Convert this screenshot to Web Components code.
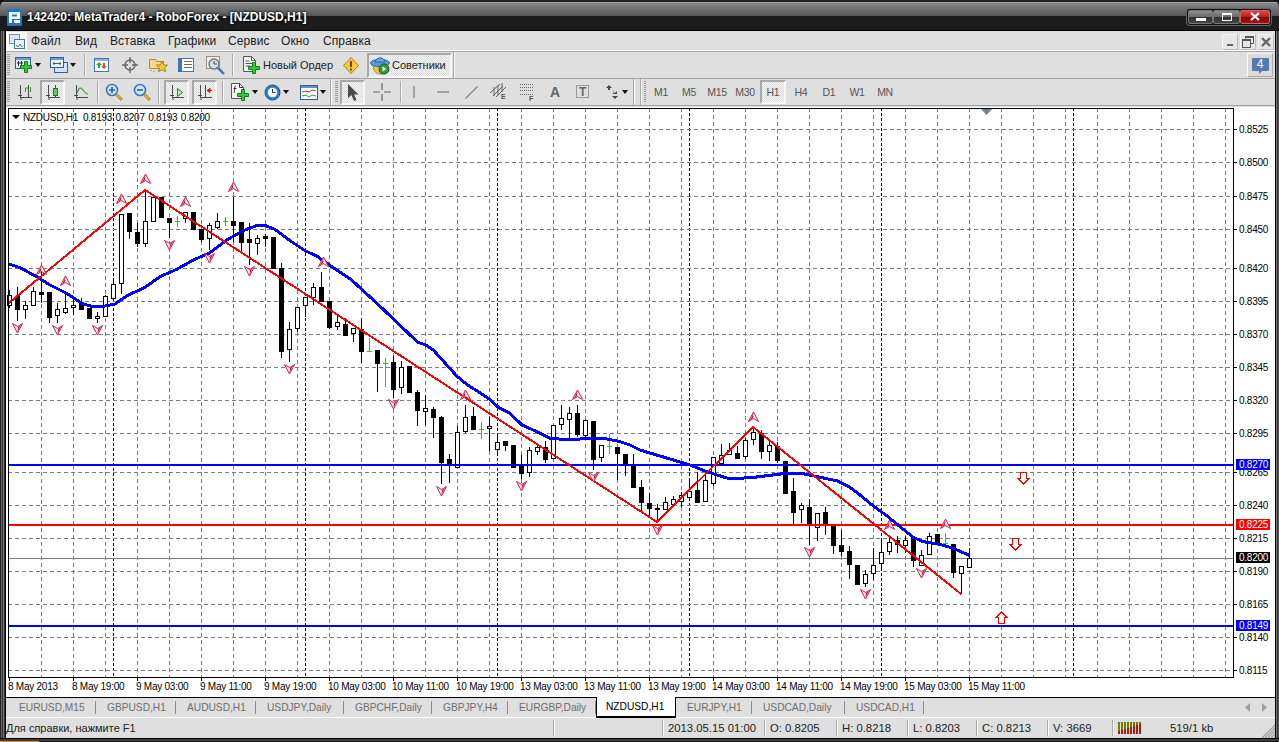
<!DOCTYPE html>
<html>
<head>
<meta charset="utf-8">
<title>MetaTrader4</title>
<style>
html,body{margin:0;padding:0;background:#1a1a1a;overflow:hidden}
body{font-family:"Liberation Sans",Arial,sans-serif}
</style>
</head>
<body>
<mt-window>
    <mt-titlebar slot="title" caption="142420: MetaTrader4 - RoboForex - [NZDUSD,H1]"></mt-titlebar>
    <mt-menubar>
        <mt-menu w="44">Файл</mt-menu>
        <mt-menu w="35">Вид</mt-menu>
        <mt-menu w="58">Вставка</mt-menu>
        <mt-menu w="60">Графики</mt-menu>
        <mt-menu w="53">Сервис</mt-menu>
        <mt-menu w="42">Окно</mt-menu>
        <mt-menu w="60">Справка</mt-menu>
    </mt-menubar>
    <mt-toolbar>
        <mt-grip></mt-grip>
        <mt-tool w="30" ml="1" pl="3" icon="newchart" arrow></mt-tool>
        <mt-tool w="30" ml="5" pl="3" icon="profiles" arrow></mt-tool>
        <mt-sep ml="7"></mt-sep>
        <mt-tool w="24" ml="4" icon="market"></mt-tool>
        <mt-tool w="24" ml="4" icon="nav"></mt-tool>
        <mt-tool w="24" ml="4" icon="stars"></mt-tool>
        <mt-tool w="24" ml="4" icon="term"></mt-tool>
        <mt-tool w="24" ml="5" icon="tester"></mt-tool>
        <mt-sep ml="5"></mt-sep>
        <mt-tool w="98" ml="4" pl="5" icon="order">Новый Ордер</mt-tool>
        <mt-tool w="24" ml="3" icon="warn"></mt-tool>
        <mt-tool w="85" ml="4" pl="1" icon="experts" pressed>Советники</mt-tool>
        <mt-sep ml="1" strong></mt-sep>
        <mt-chat>4</mt-chat>
    </mt-toolbar>
    <mt-toolbar>
        <mt-grip></mt-grip>
        <mt-tool w="24" ml="2" icon="bars"></mt-tool>
        <mt-tool w="25" ml="3" icon="candle" pressed></mt-tool>
        <mt-tool w="25" ml="3" icon="line"></mt-tool>
        <mt-sep ml="4"></mt-sep>
        <mt-tool w="25" ml="2" icon="zoomin"></mt-tool>
        <mt-tool w="26" ml="3" icon="zoomout"></mt-tool>
        <mt-sep ml="3"></mt-sep>
        <mt-tool w="25" ml="4" icon="autoscroll" pressed></mt-tool>
        <mt-tool w="25" ml="3" icon="shift" pressed></mt-tool>
        <mt-sep ml="5"></mt-sep>
        <mt-tool w="30" ml="4" pl="3" icon="indicator" arrow></mt-tool>
        <mt-tool w="31" ml="3" pl="3" icon="clock" arrow></mt-tool>
        <mt-tool w="29" ml="5" pl="3" icon="template" arrow></mt-tool>
        <mt-sep ml="4" strong></mt-sep>
        <mt-grip ml="2"></mt-grip>
        <mt-tool w="25" ml="1" icon="cursor" pressed></mt-tool>
        <mt-tool w="25" ml="4" icon="cross"></mt-tool>
        <mt-sep ml="6"></mt-sep>
        <mt-tool w="24" icon="vline"></mt-tool>
        <mt-tool w="24" ml="5" icon="hline"></mt-tool>
        <mt-tool w="24" ml="4" icon="trend"></mt-tool>
        <mt-tool w="24" ml="4" icon="channel"></mt-tool>
        <mt-tool w="24" ml="4" icon="fibo"></mt-tool>
        <mt-tool w="24" ml="4" icon="textA"></mt-tool>
        <mt-tool w="24" ml="4" icon="textT"></mt-tool>
        <mt-tool w="32" ml="5" pl="5" icon="arrows" arrow></mt-tool>
        <mt-sep ml="1" strong></mt-sep>
        <mt-sep ml="5" strong></mt-sep>
        <mt-grip ml="1" w="3"></mt-grip>
        <mt-period>M1</mt-period>
        <mt-period>M5</mt-period>
        <mt-period>M15</mt-period>
        <mt-period>M30</mt-period>
        <mt-period pressed>H1</mt-period>
        <mt-period>H4</mt-period>
        <mt-period>D1</mt-period>
        <mt-period>W1</mt-period>
        <mt-period>MN</mt-period>
    </mt-toolbar>
    <mt-chart></mt-chart>
    <mt-tabs>
        <mt-tab w="88">EURUSD,M15</mt-tab>
        <mt-tab w="80">GBPUSD,H1</mt-tab>
        <mt-tab w="80">AUDUSD,H1</mt-tab>
        <mt-tab w="88">USDJPY,Daily</mt-tab>
        <mt-tab w="88">GBPCHF,Daily</mt-tab>
        <mt-tab w="76">GBPJPY,H4</mt-tab>
        <mt-tab w="88">EURGBP,Daily</mt-tab>
        <mt-tab w="80" active>NZDUSD,H1</mt-tab>
        <mt-tab w="76">EURJPY,H1</mt-tab>
        <mt-tab w="93">USDCAD,Daily</mt-tab>
        <mt-tab w="79">USDCAD,H1</mt-tab>
    </mt-tabs>
    <mt-statusbar>
        <mt-cell w="548">Для справки, нажмите F1</mt-cell>
        <mt-cell w="109"></mt-cell>
        <mt-cell w="102">2013.05.15 01:00</mt-cell>
        <mt-cell w="72">O: 0.8205</mt-cell>
        <mt-cell w="71">H: 0.8218</mt-cell>
        <mt-cell w="69">L: 0.8203</mt-cell>
        <mt-cell w="71">C: 0.8213</mt-cell>
        <mt-cell w="65">V: 3669</mt-cell>
        <mt-cell w="57"><mt-conn></mt-conn></mt-cell>
        <mt-cell w="90">519/1 kb</mt-cell>
    </mt-statusbar>
</mt-window>

<script>
const FONT = `"Liberation Sans",Arial,sans-serif`;
const PRESSED = `background:conic-gradient(#f6f6f6 25%,#dadada 0 50%,#f6f6f6 0 75%,#dadada 0) 0 0/2px 2px;border:2px solid;border-color:#a8a8a8 #f6f6f6 #f6f6f6 #a8a8a8;box-sizing:border-box;`;

const plus = (x, y) => `<path d="M${x+4.5} ${y+.5}h3v4h4v3h-4v4h-3v-4h-4v-3h4z" fill="#36c736" stroke="#0d7d1f"/>`;
const axis = `<path d="M3.5 1v12.5H15M1 11.5h4M4 16v-3" fill="none" stroke="#4a4a4a"/><path d="M11.5 1v13" stroke="#4a4a4a"/>`;
const lens = (sign) => `<circle cx="7" cy="7" r="5.5" fill="#cfe6fb" stroke="#3a78c0" stroke-width="1.6"/><path d="M11 11l6 6" stroke="#b08a20" stroke-width="3"/><path d="M11.5 11.5l5 5" stroke="#f0d060" stroke-width="1"/><path d="${sign}" stroke="#2a5fa8" stroke-width="1.6"/>`;

const ICONS = {
    newchart: [18,16,`<rect x=".5" y=".5" width="15" height="11" fill="#e4eefa" stroke="#2b5f9e"/><rect x="1" y="1" width="14" height="2" fill="#6c9ad2"/><path d="M3.5 4v5M6.5 4v5M2 6h6" stroke="#333"/>${plus(5,4)}`],
    profiles: [18,16,`<rect x="4.5" y="5.5" width="13" height="10" fill="#d5e4f6" stroke="#2b5f9e"/><rect x=".5" y=".5" width="13" height="10" fill="#eef4fb" stroke="#2b5f9e"/><rect x="1" y="1" width="12" height="2" fill="#6c9ad2"/><path d="M3 6.5h8M4 5v3M10 5v3" stroke="#555"/>`],
    market: [16,16,`<rect x=".5" y="1.5" width="14" height="13" fill="#fff" stroke="#3f74b3"/><rect x="1" y="2" width="13" height="2" fill="#8db2de"/><path d="M5 5l3 3H6v3H4V8H2z" fill="#2ca82c"/><path d="M10 12l-3-3h2V6h2v3h2z" fill="#e0502a"/>`],
    nav: [16,16,`<circle cx="8" cy="8" r="5" fill="none" stroke="#666" stroke-width="1.4"/><path d="M8 0v6M8 10v6M0 8h6M10 8h6" stroke="#666" stroke-width="1.4"/>`],
    stars: [19,18,`<path d="M.5 3.5h6l1 2h7v7H.5z" fill="#f5d986" stroke="#a98c3c"/><path d="M13 5l1.6 3.8 4 .3-3 2.7 1 4-3.6-2.1-3.6 2.1 1-4-3-2.7 4-.3z" fill="#f3c93a" stroke="#a8841c"/><path d="M2 14v1M5 15v1" stroke="#777"/>`],
    term: [16,15,`<rect x=".5" y=".5" width="15" height="13" fill="#fff" stroke="#3f74b3"/><rect x="1" y="1" width="3" height="12" fill="#3f74b3"/><path d="M6 3.5h8M6 6.5h8M6 9.5h8" stroke="#6a6a6a"/>`],
    tester: [19,19,`<rect x=".5" y=".5" width="13" height="12" fill="#f3efe8" stroke="#a08c80"/><circle cx="8" cy="8" r="5" fill="#cfe0f2" stroke="#777" stroke-width="1.4"/><path d="M8 5v3h3" stroke="#444" fill="none"/><path d="M12 12l6 6" stroke="#3b6fb0" stroke-width="2.4"/>`],
    order: [18,19,`<path d="M.5.5h8l4 4v11H.5z" fill="#fbfbfb" stroke="#555"/><path d="M8.5.5v4h4M2.5 5h4M2.5 7.5h7M2.5 10h5" fill="none" stroke="#555"/>${plus(5,6)}`],
    warn: [16,17,`<path d="M8 .5l7.5 8-7.5 8-7.5-8z" fill="#f7c93a" stroke="#a9811a"/><path d="M8 4v6M8 11.5v2" stroke="#6b4a08" stroke-width="2"/>`],
    experts: [20,19,`<path d="M3 9c0 6 3 9 8 9s6-4 6-8z" fill="#e8c84a" stroke="#a88a1c"/><ellipse cx="10" cy="7" rx="9.5" ry="3.6" fill="#5d9bd8" stroke="#2e62a2"/><path d="M5 6c1-5 9-6 10 0z" fill="#6aa6e0" stroke="#2e62a2"/><circle cx="14" cy="13" r="5" fill="#2f9a3a" stroke="#176020"/><path d="M12.5 10.5l4 2.5-4 2.5z" fill="#fff"/>`],
    bars: [16,16,`${axis}<path d="M8.5 4v4M8.5 4h3M13.5 3v5" stroke="#2a9a2a" fill="none"/>`],
    candle: [16,16,`${axis.replace('<path d="M11.5 1v13" stroke="#4a4a4a"/>','')}<path d="M10.5 1v13" stroke="#4a4a4a"/><rect x="8.5" y="4.5" width="4" height="7" fill="#55d455" stroke="#14801f"/>`],
    line: [16,16,`<path d="M3.5 1v12.5H15M1 11.5h4M4 16v-3" fill="none" stroke="#4a4a4a"/><path d="M4 9c2-6 4-6 6-3s3 4 5 4" fill="none" stroke="#3aa03a" stroke-width="1.2"/>`],
    zoomin: [18,18,lens("M4 7h6M7 4v6")],
    zoomout: [18,18,lens("M4 7h6")],
    autoscroll: [16,16,`<path d="M3.5 1v12.5H15M1 11.5h4M4 16v-3" fill="none" stroke="#4a4a4a"/><path d="M8.5 4.5l5 4-5 4z" fill="#b8f0b8" stroke="#1e8a1e"/>`],
    shift: [16,16,`<path d="M3.5 1v12.5H15M1 11.5h4M4 16v-3M8.5 1v13" fill="none" stroke="#4a4a4a"/><path d="M10 6.5h5M10 6.5l3-2v4z" fill="#d8301a" stroke="#c02010"/>`],
    indicator: [19,19,`<path d="M.5.5h8l4 4v11H.5z" fill="#fbfbfb" stroke="#555"/><path d="M8.5.5v4h4M5 3c-2 0-1 3-2 7M2.5 5.5h3" fill="none" stroke="#333"/>${plus(6,6)}`],
    clock: [17,17,`<circle cx="8.5" cy="8.5" r="7.5" fill="#2d7cd0" stroke="#174a8c"/><circle cx="8.5" cy="8.5" r="4.8" fill="#f3f7fb"/><path d="M8.5 5v3.5h3" fill="none" stroke="#333"/>`],
    template: [18,15,`<rect x=".5" y=".5" width="17" height="14" fill="#fff" stroke="#2b5f9e"/><rect x="1" y="1" width="16" height="2" fill="#5c8fcf"/><path d="M2 7l4-1 3 1 3-2 4 1" fill="none" stroke="#d03020"/><path d="M2 11l4-1 3 2 3-2 4 1" fill="none" stroke="#2a9a2a"/>`],
    cursor: [12,17,`<path d="M1 0v14l3.5-3 2.5 6 2.5-1-2.5-5.5h4.5z" fill="#4a4a4a"/>`],
    cross: [18,18,`<path d="M9 0v7M9 11v7M0 9h7M11 9h7" stroke="#666" stroke-width="1.2"/>`],
    vline: [2,12,`<path d="M1 0v12" stroke="#666"/>`],
    hline: [12,2,`<path d="M0 1h12" stroke="#666"/>`],
    trend: [13,13,`<path d="M.5 12.5l12-12" stroke="#888" stroke-width="1.3"/>`],
    channel: [20,20,`<path d="M1 11L11 2M4 14L14 4M7 15L17 5M5 5v9M9 3v10M13 1v9" stroke="#666" fill="none"/><text x="12" y="17" font-size="7" font-weight="bold" fill="#555" font-family="Liberation Sans">E</text>`],
    fibo: [15,20,`<path d="M0 2.500h14M0 5.500h14M0 8.500h14M0 12.500h14" stroke="#666" stroke-dasharray="1 1"/><text x="9" y="19" font-size="7" font-weight="bold" fill="#555" font-family="Liberation Sans">F</text>`],
    textA: [14,18,`<text x="2" y="14" font-size="14" font-weight="bold" fill="#666" font-family="Liberation Sans">A</text>`],
    textT: [14,16,`<rect x=".5" y="1.500" width="12" height="12" fill="none" stroke="#555" stroke-dasharray="1 1"/><text x="3" y="12" font-size="12" font-weight="bold" fill="#666" font-family="Liberation Sans">T</text>`],
    arrows: [15,14,`<path d="M4 0l3 3H5v2H3V3H1zM7 5l3 3 2-2v3H7l2-1z" fill="#444"/><path d="M10 14l-3-3h6z" fill="#444"/>`]
};

class MtWindow extends HTMLElement{
    constructor(){
        super();
        this.attachShadow({mode: "open"}).innerHTML = `
        <style>
        :host{display:flex;flex-direction:column;width:1279px;height:742px;overflow:hidden;background:#111;position:relative}
        .frame{flex:1;display:flex;flex-direction:column;min-height:0;padding:0 4px 4px 6px;
            background:linear-gradient(90deg,#222 0 1px,#666 1px 2px,#333 2px 3px,#777 3px 4px,#333 4px 5px,#000 5px 6px,transparent 6px),
            linear-gradient(270deg,#555 0 1px,#333 1px 2px,#777 2px 3px,#000 3px 4px,transparent 4px);
            background-color:#dfdfdf;box-sizing:border-box;position:relative}
        .bottom{position:absolute;left:0;right:0;bottom:0;height:4px;background:linear-gradient(#000 0 1px,#3c3c3c 1px 3px,#1a1a1a 3px)}
        .bottom i{position:absolute;left:0;bottom:0;width:39px;height:1px;background:#e08a20}
        </style>
        <slot name="title"></slot>
        <div class="frame"><slot></slot><div class="bottom"><i></i></div></div>`;
    }
}

class MtTitlebar extends HTMLElement{
    constructor(){
        super();
        this.attachShadow({mode: "open"}).innerHTML = `
        <style>
        :host{display:flex;align-items:center;height:31px;box-sizing:border-box;padding:3px 5px 0 7px;flex:none;
            background:linear-gradient(#222 0 2px,#a0a0a0 2px 3px,#888 3px,#555 16px,#1c1c1c 16px,#1c1c1c 30px,#000 30px);
            border-radius:7px 7px 0 0;}
        svg{flex:none}
        .cap{margin-left:5px;color:#fff;font:bold 12px ${FONT};text-shadow:0 0 3px #000,0 0 2px #000;white-space:nowrap;flex:1}
        .btns{display:flex;padding:1px;background:#111;border-radius:3px;margin-right:3px;margin-top:-1px;box-shadow:0 0 0 1px #666}
        .b{height:14px;display:flex;align-items:center;justify-content:center;box-sizing:border-box;border:1px solid #777;border-radius:2px}
        .g{background:linear-gradient(#8c8c8c,#6a6a6a 50%,#333 50%,#444)}
        .r{background:linear-gradient(#d44,#b52020 50%,#7e0a0a 50%,#9a1818);border-color:#c66}
        </style>
        <svg width="15" height="17" viewBox="0 0 15 17"><rect width="15" height="17" rx="1" fill="#1d76c4"/><path d="M2 3h11v7H5v4H2z" fill="#fff"/><rect x="5" y="5.500" width="5" height="2" fill="#1d76c4"/><rect x="7" y="11" width="6" height="3" fill="#fff"/></svg>
        <div class="cap">${this.getAttribute("caption")}</div>
        <div class="btns">
            <div class="b g" style="width:25px"><svg width="10" height="8"><rect y="5" width="10" height="3" fill="#fff"/></svg></div>
            <div class="b g" style="width:27px"><svg width="10" height="8"><rect x=".5" y=".5" width="9" height="7" fill="none" stroke="#fff"/><rect width="10" height="2" fill="#fff"/></svg></div>
            <div class="b r" style="width:30px"><svg width="10" height="9"><path d="M1 1l8 7M9 1L1 8" stroke="#fff" stroke-width="2.2"/></svg></div>
        </div>`;
    }
}

class MtMenubar extends HTMLElement{
    constructor(){
        super();
        this.attachShadow({mode: "open"}).innerHTML = `
        <style>
        :host{display:flex;align-items:center;height:21px;flex:none;box-sizing:border-box;background:#dfdfdf;border-bottom:1px solid #a8a8a8;box-shadow:inset 0 -1px #fff;}
        .logo{width:21px;height:19px;background:#fff;display:flex;align-items:center;justify-content:center;margin-right:4px}
        .right{margin-left:auto;display:flex;gap:2px;margin-right:1px;margin-top:1px}
        .c{width:16px;height:16px;display:flex;align-items:center;justify-content:center;background:#e6e6e6;border:1px solid;border-color:#f4f4f4 #bbb #bbb #f4f4f4;box-sizing:border-box}
        </style>
        <div class="logo"><svg width="16" height="15" viewBox="0 0 16 15"><rect x=".5" y=".5" width="10" height="9" fill="#dbe8f7" stroke="#6d93c6"/><rect x="5.500" y="5.500" width="10" height="9" fill="#eef4fb" stroke="#3f74b3"/><path d="M7 11l2 2 2-3 2 3" fill="none" stroke="#3f74b3"/></svg></div>
        <slot></slot>
        <div class="right">
            <div class="c"><svg width="10" height="10"><rect x="2" y="7" width="6" height="2" fill="#666"/></svg></div>
            <div class="c"><svg width="14" height="14"><path d="M4.500 3.500V1.500h8v7h-3" fill="none" stroke="#555"/><rect x="1.500" y="4.500" width="8" height="8" fill="none" stroke="#555"/><rect x="4" y="1" width="9" height="2" fill="#555"/><rect x="1" y="4" width="9" height="2" fill="#555"/></svg></div>
            <div class="c"><svg width="12" height="12"><path d="M2 2l8 8M10 2l-8 8" stroke="#666" stroke-width="2.4"/></svg></div>
        </div>`;
    }
}

class MtMenu extends HTMLElement{
    constructor(){
        super();
        this.attachShadow({mode: "open"}).innerHTML = `
        <style>:host{display:block;width:${this.getAttribute("w")}px;font:12px ${FONT};color:#222;white-space:nowrap;letter-spacing:.1px}</style><slot></slot>`;
    }
}

class MtToolbar extends HTMLElement{
    constructor(){
        super();
        this.attachShadow({mode: "open"}).innerHTML = `
        <style>:host{display:flex;align-items:center;height:27px;flex:none;box-sizing:border-box;background:#dfdfdf;border-bottom:1px solid #a0a0a0;}</style><slot></slot>`;
    }
}

class MtGrip extends HTMLElement{
    constructor(){
        super();
        this.attachShadow({mode: "open"}).innerHTML = `
        <style>:host{display:block;width:${this.getAttribute("w") || 5}px;height:22px;flex:none;margin-left:${this.getAttribute("ml") || 0}px;
            background:repeating-linear-gradient(#999 0 1px,transparent 1px 2px) 1px 0/3px 100% no-repeat}</style>`;
    }
}

class MtSep extends HTMLElement{
    constructor(){
        super();
        const strong = this.hasAttribute("strong");
        this.attachShadow({mode: "open"}).innerHTML = `
        <style>:host{display:block;width:2px;height:${strong ? 26 : 22}px;flex:none;margin-left:${this.getAttribute("ml") || 0}px;
            background:linear-gradient(90deg,#a8a8a8 0 1px,#f8f8f8 1px)}</style>`;
    }
}

class MtTool extends HTMLElement{
    constructor(){
        super();
        const ic = ICONS[this.getAttribute("icon")];
        const pressed = this.hasAttribute("pressed");
        const pl = this.getAttribute("pl");
        this.attachShadow({mode: "open"}).innerHTML = `
        <style>
        :host{display:flex;align-items:center;justify-content:${pl ? "flex-start" : "center"};gap:2px;height:25px;flex:none;box-sizing:border-box;
            width:${this.getAttribute("w")}px;margin-left:${this.getAttribute("ml") || 0}px;padding-left:${pl || 0}px;
            font:11px ${FONT};color:#222;white-space:nowrap;${pressed ? PRESSED : ""}}
        svg{flex:none;display:block}
        </style>
        <svg width="${ic[0]}" height="${ic[1]}" viewBox="0 0 ${ic[0]} ${ic[1]}">${ic[2]}</svg>
        <slot></slot>
        ${this.hasAttribute("arrow") ? `<svg width="6" height="4"><path d="M0 0h6L3 4z" fill="#111"/></svg>` : ""}`;
    }
}

class MtChat extends HTMLElement{
    constructor(){
        super();
        this.attachShadow({mode: "open"}).innerHTML = `
        <style>
        :host{display:block;margin-left:auto;margin-right:2px;width:26px;height:24px;box-sizing:border-box;border:1px solid;border-color:#f8f8f8 #aaa #aaa #f8f8f8;position:relative;background:#d9d9d9}
        svg{position:absolute;left:4px;top:4px}
        span{position:absolute;left:4px;top:4px;width:16px;text-align:center;color:#fff;font:12px/13px ${FONT}}
        </style>
        <svg width="17" height="18" viewBox="0 0 17 18"><path d="M1 0h15a1 1 0 0 1 1 1v11a1 1 0 0 1-1 1H10l-3 3v-3H1a1 1 0 0 1-1-1V1a1 1 0 0 1 1-1z" fill="#5878b4"/></svg>
        <span><slot></slot></span>`;
    }
}

class MtPeriod extends HTMLElement{
    constructor(){
        super();
        this.attachShadow({mode: "open"}).innerHTML = `
        <style>
        :host{display:flex;align-items:center;justify-content:center;width:26px;height:24px;margin-left:2px;flex:none;box-sizing:border-box;
            font:10.5px ${FONT};letter-spacing:-.3px;color:#555;${this.hasAttribute("pressed") ? PRESSED : ""}}
        </style><slot></slot>`;
    }
}

class MtTabs extends HTMLElement{
    constructor(){
        super();
        this.attachShadow({mode: "open"}).innerHTML = `
        <style>
        :host{display:flex;height:21px;flex:none;box-sizing:border-box;background:#dfdfdf;border-top:1px solid #000;border-bottom:1px solid #fff;padding-left:2px;position:relative;margin-right:0}
        .nav{margin-left:auto;display:flex;gap:11px;align-items:center;padding-right:7px}
        </style>
        <slot></slot>
        <div class="nav"><svg width="6" height="9"><path d="M5 0v9L0 4.500z" fill="#a0a0a0"/></svg><svg width="6" height="9"><path d="M0 0v9l5-4.500z" fill="#a0a0a0"/></svg></div>`;
    }
}

class MtTab extends HTMLElement{
    constructor(){
        super();
        const active = this.hasAttribute("active");
        this.attachShadow({mode: "open"}).innerHTML = `
        <style>
        :host{display:flex;align-items:center;height:${active ? 20 : 19}px;box-sizing:border-box;flex:none;width:${this.getAttribute("w")}px;padding-left:11px;
            font:10.2px ${FONT};white-space:nowrap;
            ${active ? "background:#fff;color:#000;border:1px solid #000;border-top:0;border-bottom:2px solid #000;margin-top:-1px;height:21px;padding-left:9px" : "color:#6e6e6e;"}}
        :host(:not([active])){background:linear-gradient(#8a8a8a,#8a8a8a) right center/1px 13px no-repeat}
        :host([active]){background:#fff}
        </style><slot></slot>`;
    }
}

class MtStatusbar extends HTMLElement{
    constructor(){
        super();
        this.attachShadow({mode: "open"}).innerHTML = `
        <style>
        :host{display:flex;align-items:center;height:20px;flex:none;background:#dfdfdf;position:relative}
        svg{position:absolute;right:0;bottom:0}
        </style>
        <slot></slot>
        <svg width="14" height="14"><path d="M1 14L14 1M4 14L14 4M7 14l7-7M10 14l4-4M13 14l1-1" stroke="#9a9a9a" stroke-width="1.2"/></svg>`;
    }
}

class MtCell extends HTMLElement{
    constructor(){
        super();
        this.attachShadow({mode: "open"}).innerHTML = `
        <style>
        :host{display:flex;align-items:center;height:16px;box-sizing:border-box;flex:none;width:${this.getAttribute("w")}px;
            padding-left:5px;font:11.3px ${FONT};color:#222;white-space:nowrap;
            border-right:1px solid #a8a8a8;box-shadow:1px 0 #fff}
        :host(:first-child){padding-left:0;font-size:11px}
        :host(:last-child){border:0;box-shadow:none;padding-left:0}
        :host(:nth-last-child(2)){border:0;box-shadow:none}
        </style><slot></slot>`;
    }
}

class MtConn extends HTMLElement{
    constructor(){
        super();
        let bars = "";
        for (let i = 0; i < 8; i++){
            const x = i * 3;
            const h = 3 + i;
            bars += `<rect x="${x}" y="0" width="2" height="${12 - h}" fill="#6b7f00"/><rect x="${x}" y="${12 - h}" width="2" height="${h}" fill="#b01808"/>`;
        }
        this.attachShadow({mode: "open"}).innerHTML = `
        <style>:host{display:block;height:12px;line-height:0}</style><svg width="24" height="12">${bars}</svg>`;
    }
}

// candles as read from the reference: [wick top, body top, body bottom, wick bottom, kind]
// h hollow, b black, g green doji. y values are crop coords, scaled 3x
const CANDLE_SEGS = [
    [170, [
        [360,376,404,415,"h"],[350,378,416,452,"b"],[392,406,418,446,"h"],[350,364,404,404,"h"],[300,366,372,400,"b"],
        [366,366,440,458,"b"],[400,418,436,458,"h"],[372,415,425,432,"h"],[388,406,412,434,"h"],[385,402,418,420,"b"],
        [414,414,444,445,"b"],[425,439,445,458,"h"],[375,379,437,440,"h"],[330,343,383,383,"h"],[133,133,340,372,"h"],
        [129,129,182,208,"b"],[160,186,218,232,"b"],[60,154,220,230,"h"],[82,82,152,155,"h"],[82,82,142,142,"b"],
        [144,144,155,205,"b"],[138,153,153,170,"g"],[125,125,145,158,"h"],[127,127,177,178,"b"],[178,178,206,215,"b"],
        [158,166,203,240,"h"],[130,154,170,176,"h"],[142,153,153,168,"g"],[80,154,164,215,"b"],[156,156,215,250,"b"],
        [160,208,215,285,"b"],[195,205,218,255,"h"],[192,198,203,232,"b"],[200,200,294,294,"b"],[280,294,542,563,"b"],
        [457,478,538,575,"h"],[412,412,475,485,"h"],[380,380,406,440,"h"],[340,350,382,404,"h"]
    ]],
    [250, [
        [65,110,152,155,"b"],[153,153,230,238,"b"],[195,217,228,240,"h"],[205,222,254,254,"b"],[235,235,250,276,"h"],
        [205,238,302,338,"b"],[265,304,304,305,"g"],[300,300,338,425,"b"],[325,340,340,410,"g"],[318,337,416,444,"b"],
        [332,352,412,432,"h"],[348,348,426,430,"b"],[420,426,479,528,"b"],[435,475,484,525,"h"],[472,477,500,564,"b"],
        [498,501,635,702,"b"],[612,628,642,698,"b"],[528,547,650,650,"h"],[465,502,542,548,"h"],[472,498,536,536,"b"],
        [516,538,538,566,"g"],[500,529,535,604,"h"],[552,577,598,610,"h"],[574,574,584,602,"b"],[585,585,650,652,"b"],
        [615,645,668,686,"b"],[590,600,665,680,"h"],[578,590,604,616,"h"],[572,592,628,640,"b"],[526,526,625,628,"h"],
        [465,503,523,540,"h"],[472,488,508,565,"h"],[465,490,552,560,"b"],[511,511,554,570,"h"],[514,514,626,660,"b"],
        [586,586,622,636,"h"],[552,588,588,612,"g"],[590,592,610,690,"b"],[612,612,645,678,"b"],[612,648,710,710,"b"]
    ]],
    [400, [
        [240,262,305,340,"b"],[278,310,323,355,"b"],[313,325,328,365,"b"],[290,305,326,328,"h"],[288,298,312,320,"h"],
        [275,286,302,322,"h"],[235,274,290,290,"h"],[215,270,305,305,"b"],[215,241,302,305,"h"],[172,172,248,258,"h"],
        [132,166,190,190,"h"],[130,150,163,163,"h"],[138,158,174,176,"b"],[113,121,167,176,"h"],[80,97,116,135,"h"],
        [90,100,152,178,"b"],[125,136,154,184,"h"],[125,137,180,190,"b"],[183,183,278,278,"b"],[235,273,335,375,"b"],
        [310,316,328,370,"h"],[298,322,374,435,"b"],[340,340,380,422,"h"],[322,337,368,405,"b"],[373,373,434,462,"b"],
        [390,436,452,468,"b"],[438,454,491,537,"b"],[495,495,552,555,"b"],[510,523,548,562,"h"],[445,496,520,540,"h"],
        [422,455,490,505,"h"],[408,425,454,464,"h"],[408,420,433,460,"b"],[408,421,436,460,"h"],[408,415,480,500,"b"],
        [450,464,494,498,"h"],[398,409,461,466,"h"],[403,403,425,430,"b"],[400,429,429,436,"g"],[433,433,515,535,"b"],
        [499,499,520,582,"h"],[445,475,502,502,"h"]
    ]]
];

const MA_PTS = [
    [0,[[28,282],[60,293],[110,320],[150,345],[200,370],[245,400],[275,409],[310,409],[345,402],[385,375],[435,352],[480,320],[530,298],[580,270],[630,248],[680,210],[730,182],[770,167],[800,168],[825,178],[870,212],[915,242],[950,258]],170],
    [320,[[0,25],[50,60],[95,90],[125,118],[160,150],[190,178],[225,212],[260,245],[292,276],[315,284],[340,300],[365,328],[385,350],[410,378],[440,403],[470,422],[510,448],[535,472],[570,490],[605,524],[650,545],[690,565],[760,570],[795,565],[850,565],[900,575],[930,585]],250],
    [640,[[0,150],[50,165],[100,180],[150,195],[200,215],[260,234],[300,235],[350,231],[430,221],[480,219],[540,232],[590,242],[630,262],[660,285],[700,318],[740,347],[780,380],[820,412],[850,425],[900,433],[940,445],[990,467]],400]
];

const PRICES = [["0.8525",129],["0.8500",162],["0.8475",196],["0.8450",229],["0.8420",268],["0.8395",301],["0.8370",334],["0.8345",367],["0.8320",400],["0.8295",433],["0.8265",472],["0.8240",505],["0.8215",538],["0.8190",571],["0.8165",604],["0.8140",637],["0.8115",670]];
const TIMES = ["8 May 2013","8 May 19:00","9 May 03:00","9 May 11:00","9 May 19:00","10 May 03:00","10 May 11:00","10 May 19:00","13 May 03:00","13 May 11:00","13 May 19:00","14 May 03:00","14 May 11:00","14 May 19:00","15 May 03:00","15 May 11:00"];
const UP_MARKS = [[41,270],[65,281],[121,199],[145,179],[185,202],[233,187],[323,262],[465,395],[577,395],[753,417],[889,525],[945,524]];
const DOWN_MARKS = [[17,328],[57,330],[97,330],[169,245],[209,258],[249,271],[289,369],[393,404],[441,491],[521,486],[593,477],[657,530],[809,552],[865,594],[921,573]];

class MtChart extends HTMLElement{
    constructor(){
        super();
        this.attachShadow({mode: "open"}).innerHTML = `
        <style>
        :host{display:block;flex:1;min-height:0;background:#fff;box-shadow:inset 0 1px #dfdfdf}
        svg{display:block}
        text{font-family:${FONT};font-size:10px;letter-spacing:-.25px;fill:#000}
        </style>
        <svg width="1269" height="591" viewBox="6 106 1269 591">${this.draw()}</svg>`;
    }
    draw(){
        const L = 8, R = 1233, T = 108, B = 677;
        let s = "";
        // grid
        for (let x = 41; x < R; x += 32){
            s += `<path d="M${x+.5} ${T}V${B}" stroke="#708090" stroke-dasharray="4 3"/>`;
        }
        for (let x = 113; x < R; x += 192){
            s += `<path d="M${x+.5} ${T}V${B}" stroke="#fff"/><path d="M${x+.5} ${T}V${B}" stroke="#000" stroke-dasharray="3 2"/>`;
        }
        for (const p of PRICES){
            s += `<path d="M${L} ${p[1]+.5}H${R}" stroke="#708090" stroke-dasharray="4 3"/>`;
        }
        s += `<path d="M${L} 558.5H${R}" stroke="#708090"/>`;
        // candles
        let i = 0;
        for (const seg of CANDLE_SEGS){
            for (const c of seg[1]){
                const x = 9 + 8 * i, y = v => Math.round(seg[0] + v / 3);
                if (c[4] === "g"){
                    s += `<path d="M${x+.5} ${y(c[0])}V${y(c[3])}M${x-2} ${y(c[1])+.5}h5" stroke="#00e000"/>`;
                } else {
                    s += `<path d="M${x+.5} ${y(c[0])}V${y(c[3])}" stroke="#000"/>`;
                    const t = y(c[1]), b = Math.max(y(c[2]), t + 1);
                    s += `<rect x="${x-1.5}" y="${t+.5}" width="4" height="${b-t}" fill="${c[4] === "h" ? "#fff" : "#000"}" stroke="#000"/>`;
                }
                i++;
            }
        }
        // horizontal levels
        s += `<g shape-rendering="crispEdges">`;
        s += `<rect x="${L}" y="464" width="${R-L}" height="2" fill="#0000ff"/>`;
        s += `<rect x="${L}" y="524" width="${R-L}" height="2" fill="#ff0000"/>`;
        s += `<rect x="${L}" y="625" width="${R-L}" height="2" fill="#0000ff"/>`;
        // moving average and zigzag
        const ma = [];
        for (const m of MA_PTS){
            for (const p of m[1]){
                ma.push(`${m[0] + p[0] / 3},${m[2] + p[1] / 3}`);
            }
        }
        s += `<polyline points="${ma.join(" ")}" fill="none" stroke="#0000ff" stroke-width="3"/>`;
        s += `<polyline points="9,303 145,190 657,522 753,427 961,594" fill="none" stroke="#ff0000" stroke-width="2"/>`;
        s += `</g>`;
        // fractal marks
        const up = (x, y) => `<path d="M${x} ${y-5}L${x+5} ${y+4.500}L${x} ${y+1.500}L${x-5} ${y+4.500}Z" fill="#fff" stroke="#dc143c"/><path d="M${x} ${y-4}L${x-3.500} ${y+3.500}L${x-.5} ${y+1}Z" fill="#dc143c"/>`;
        const down = (x, y) => `<path d="M${x} ${y+5}L${x+5} ${y-4.500}L${x} ${y-1.500}L${x-5} ${y-4.500}Z" fill="#fff" stroke="#dc143c"/><path d="M${x} ${y+4}L${x+3.500} ${y-3.500}L${x+.5} ${y-1}Z" fill="#dc143c"/>`;
        for (const m of UP_MARKS) s += up(m[0] + .5, m[1]);
        for (const m of DOWN_MARKS) s += down(m[0] + .5, m[1]);
        // hollow arrows
        const ad = (x, y) => `<path d="M${x-2.500} ${y-5.500}h6v6h2.500l-5.500 5.500-5.500-5.500h2.500z" fill="#fff" stroke="#ff0000" shape-rendering="crispEdges"/>`;
        const au = (x, y) => `<path d="M${x-2.500} ${y+5.500}h6v-6h2.500l-5.500-5.500-5.500 5.500h2.500z" fill="#fff" stroke="#ff0000" shape-rendering="crispEdges"/>`;
        s += ad(1023, 478) + ad(1015, 544) + au(1001, 618);
        // frame, ticks
        s += `<rect x="${L+.5}" y="${T+.5}" width="${R-L}" height="${B-T}" fill="none" stroke="#000"/>`;
        s += `<path d="M981 109h11l-5.500 6z" fill="#708090"/>`;
        for (const p of PRICES){
            s += `<path d="M${R} ${p[1]+.5}h4" stroke="#000"/>`;
            s += `<text x="1239" y="${p[1]+4}">${p[0]}</text>`;
        }
        TIMES.forEach((t, n) => {
            const x = 9 + 64 * n;
            s += `<path d="M${x+.5} ${B}v4" stroke="#000"/><text x="${x - 1}" y="690">${t}</text>`;
        });
        // price tags
        const tag = (y, c, t) => `<rect x="1236" y="${y-5}" width="34" height="11" fill="${c}"/><text x="1239" y="${y+4}" style="fill:#fff">${t}</text>`;
        s += tag(464, "#0000ff", "0.8270") + tag(524, "#ff0000", "0.8225") + tag(557, "#000", "0.8200") + tag(625, "#0000ff", "0.8149");
        // legend
        s += `<path d="M12 115h8l-4 4z" fill="#000"/><text x="23" y="121">NZDUSD,H1</text><text x="83" y="121" word-spacing="1">0.8193 0.8207 0.8193 0.8200</text>`;
        return s;
    }
}

customElements.define("mt-window", MtWindow);
customElements.define("mt-titlebar", MtTitlebar);
customElements.define("mt-menubar", MtMenubar);
customElements.define("mt-menu", MtMenu);
customElements.define("mt-toolbar", MtToolbar);
customElements.define("mt-grip", MtGrip);
customElements.define("mt-sep", MtSep);
customElements.define("mt-tool", MtTool);
customElements.define("mt-chat", MtChat);
customElements.define("mt-period", MtPeriod);
customElements.define("mt-chart", MtChart);
customElements.define("mt-tabs", MtTabs);
customElements.define("mt-tab", MtTab);
customElements.define("mt-statusbar", MtStatusbar);
customElements.define("mt-cell", MtCell);
customElements.define("mt-conn", MtConn);
</script>
</body>
</html>
